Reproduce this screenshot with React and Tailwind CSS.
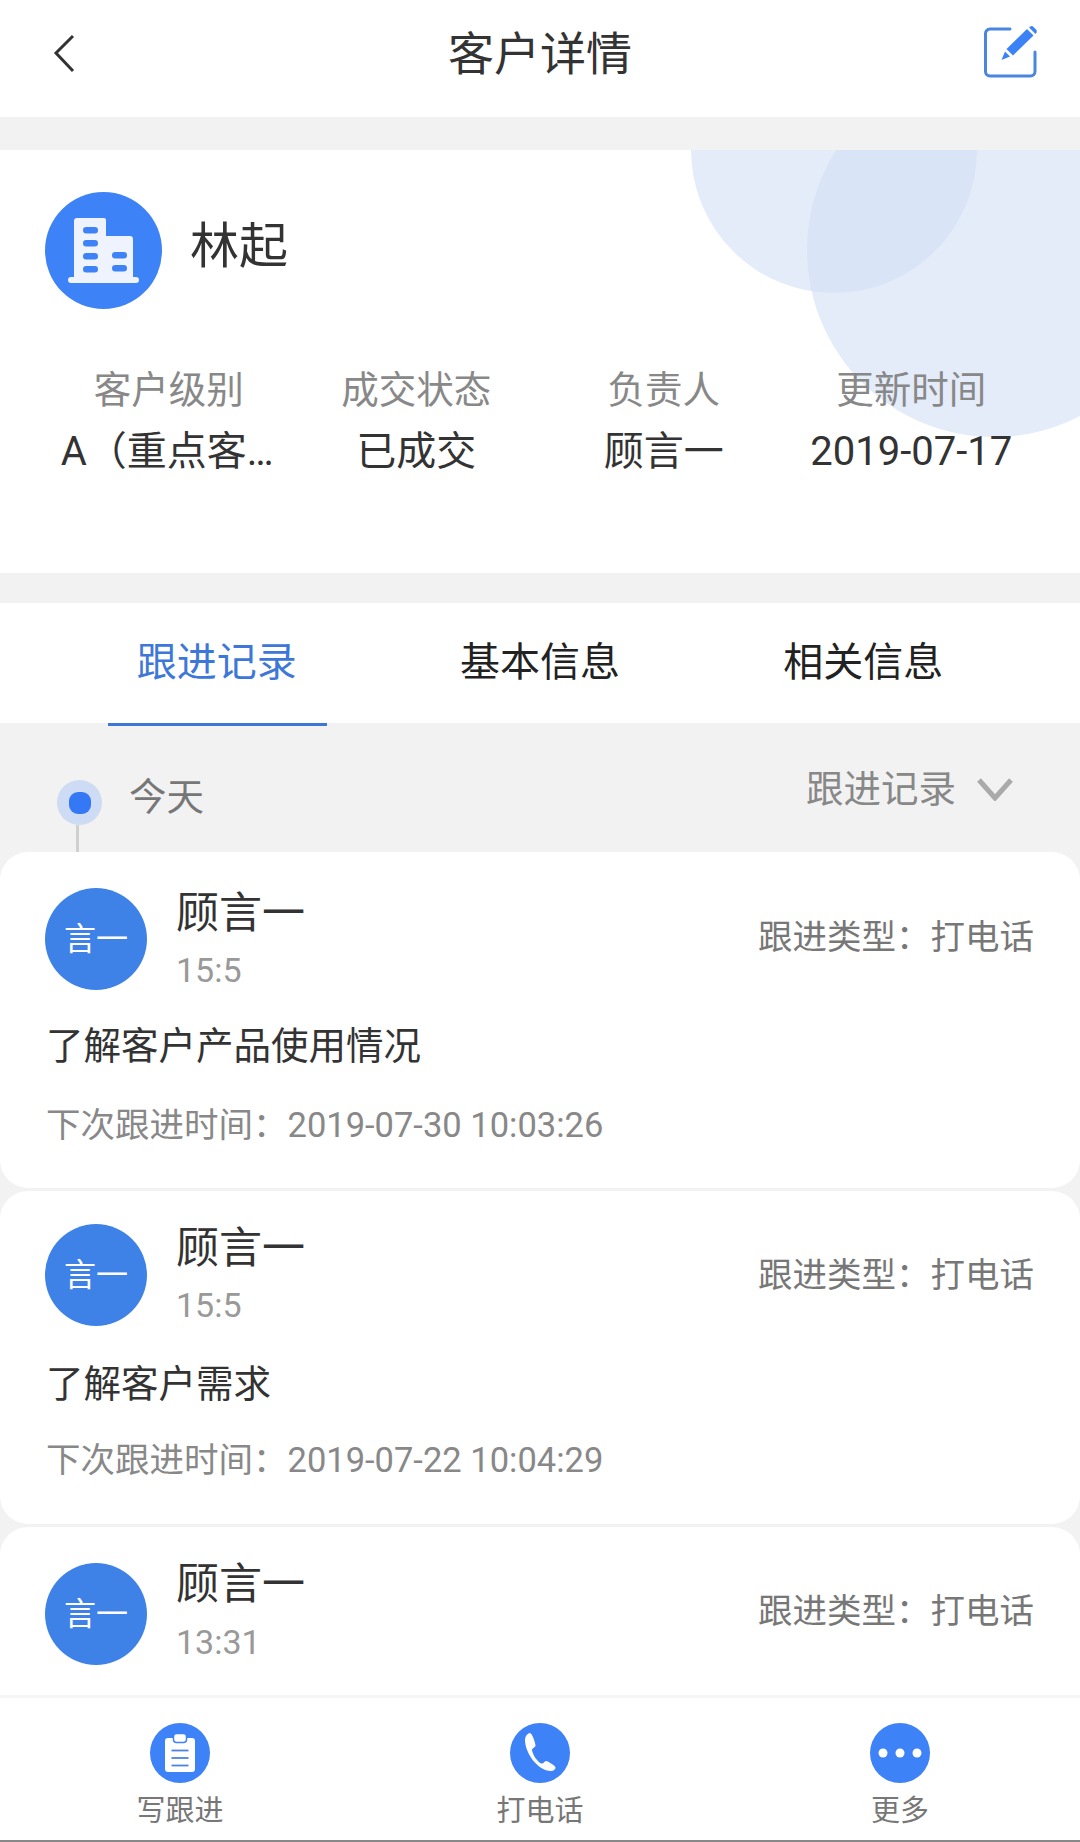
const stats = [
  { label: '客户级别', value: 'A（重点客户）' },
  { label: '成交状态', value: '已成交' },
  { label: '负责人', value: '顾言一' },
  { label: '更新时间', value: '2019-07-17' },
];

const records = [
  {
    time: '15:5', text: '了解客户产品使用情况', next: '2019-07-30 10:03:26',
    card: 'rounded-[28px] pt-[36px] pb-[41px]', name: '', timeGap: 'mt-[12px]', right: 'mt-[27px]', textGap: 'mt-[31px]', nextGap: 'mt-[32px]',
  },
  {
    time: '15:5', text: '了解客户需求', next: '2019-07-22 10:04:29',
    card: 'rounded-[28px] pt-[33px] pb-[42px]', name: '-mt-[1px]', timeGap: 'mt-[12px]', right: 'mt-[29px]', textGap: 'mt-[33px]', nextGap: 'mt-[29px]',
  },
  {
    time: '13:31', text: '', next: '',
    card: 'rounded-t-[28px] pt-[36px] flex-1', name: '-mt-[4px]', timeGap: 'mt-[13px]', right: 'mt-[26px]', textGap: '', nextGap: '',
  },
];

const BackIcon = () => (
  <svg className="ml-[13px]" width="24" height="40" viewBox="0 0 24 40" fill="none">
    <path d="M21 2 L4 19 L21 37" stroke="#333" strokeWidth="3" />
  </svg>
);

const EditIcon = () => (
  <svg width="60" height="60" viewBox="0 0 60 60" fill="none">
    <path d="M29 5 H9 a4.5 4.5 0 0 0 -4.5 4.5 V47.5 a4.5 4.5 0 0 0 4.5 4.5 H49.5 a4.5 4.5 0 0 0 4.5 -4.5 V28" stroke="#4a85e0" strokeWidth="3" strokeLinecap="round" />
    <path d="M20.5 36 L24 27.5 L29 32.5 Z" fill="#3b82f6" />
    <path d="M25.5 25 L46 5 L52.5 11.5 L32 31.5 Z" fill="#3b82f6" />
    <path d="M48 3.5 L49.5 2.5 Q51 1.5 52.5 3 L55 5.5 Q56.5 7 55.5 8.5 L54.5 10 Z" fill="#3b82f6" />
  </svg>
);

const BuildingIcon = () => (
  <svg width="117" height="117" viewBox="0 0 117 117">
    <circle cx="58.5" cy="58.5" r="58.5" fill="#3e82f7" />
    <path d="M32 26 H59 a2 2 0 0 1 2 2 V44 H85 a3 3 0 0 1 3 3 V86 H29 V29 a3 3 0 0 1 3 -3 Z" fill="#eef3fd" />
    <rect x="23" y="85" width="71" height="6" rx="3" fill="#eef3fd" />
    {[35, 48, 61, 74].map((y) => (
      <rect key={y} x="38" y={y} width="15" height="6.5" rx="3.25" fill="#3e82f7" />
    ))}
    {[60, 73].map((y) => (
      <rect key={y} x="67" y={y} width="15" height="6.5" rx="3.25" fill="#3e82f7" />
    ))}
  </svg>
);

const ClipboardIcon = () => (
  <svg width="60" height="60" viewBox="0 0 60 60">
    <circle cx="30" cy="30" r="30" fill="#3e82f7" />
    <rect x="15" y="15" width="30" height="34" rx="3" fill="#fff" />
    <rect x="23.5" y="10.5" width="13" height="9" rx="3" fill="#fff" stroke="#3e82f7" strokeWidth="1.5" />
    {[27.5, 35, 42.5].map((y) => (
      <rect key={y} x="21.5" y={y - 0.9} width="17" height="1.8" fill="#4a85e0" />
    ))}
  </svg>
);

const PhoneIcon = () => (
  <svg width="60" height="60" viewBox="0 0 60 60">
    <circle cx="30" cy="30" r="30" fill="#3e82f7" />
    <path d="M20 10 C18 10 15 13 15 17 C15 30 28 48 41 48 C44 48 45.5 46 45.5 44.5 C45.5 43 38 38 36 38 C34.5 38 33.5 41 31.5 40.5 C27 39 22.5 31 22 27 C22 25 25.5 24.5 25.5 22.5 C25.5 20 22 10 20 10 Z" fill="#fff" />
  </svg>
);

const MoreIcon = () => (
  <svg width="60" height="60" viewBox="0 0 60 60">
    <circle cx="30" cy="30" r="30" fill="#3e82f7" />
    <circle cx="13" cy="30" r="4.5" fill="#fff" />
    <circle cx="30" cy="30" r="4.5" fill="#fff" />
    <circle cx="47" cy="30" r="4.5" fill="#fff" />
  </svg>
);

const RecordCard = ({ record }) => (
  <div className={`bg-white px-[45px] shrink-0 ${record.card}`}>
    <div className="flex items-start">
      <div className="w-[102px] h-[102px] rounded-full bg-[#3e82e8] flex items-center justify-center text-white text-[32px] shrink-0">
        言一
      </div>
      <div className={`ml-[29px] ${record.name}`}>
        <div className="text-[43px] leading-[50px] text-[#333]">顾言一</div>
        <div className={`text-[34px] leading-[40px] text-[#999] ${record.timeGap}`}>{record.time}</div>
      </div>
      <div className={`ml-auto mr-[1px] text-[34.5px] leading-[44px] text-[#777] ${record.right}`}>跟进类型：打电话</div>
    </div>
    {record.text && (
      <div className={`ml-[1px] text-[37.5px] leading-[50px] text-[#333] ${record.textGap}`}>{record.text}</div>
    )}
    {record.next && (
      <div className={`ml-[1px] text-[34.5px] leading-[44px] text-[#888] ${record.nextGap}`}>下次跟进时间：{record.next}</div>
    )}
  </div>
);

const App = () => {
  return (
    <div className="w-[1080px] h-[1842px] flex flex-col overflow-hidden bg-[#f2f2f2] font-['Roboto','Noto_Sans_CJK_SC',sans-serif]">
      {/* Header */}
      <div className="h-[117px] shrink-0 bg-white flex items-center px-[39px] pb-[9px]">
        <div className="flex-1 flex">
          <BackIcon />
        </div>
        <div className="text-[46px] text-[#333]">客户详情</div>
        <div className="flex-1 flex justify-end">
          <EditIcon />
        </div>
      </div>

      {/* Customer card */}
      <div className="relative mt-[33px] h-[423px] shrink-0 bg-white overflow-hidden">
        <div className="absolute left-[807px] top-[-87px] w-[374px] h-[374px] rounded-full bg-[#e4ecfa]" />
        <div className="absolute left-[691px] top-[-143px] w-[286px] h-[286px] rounded-full bg-[#e4ecfa] overflow-hidden">
          <div className="absolute left-[116px] top-[56px] w-[374px] h-[374px] rounded-full bg-[#d9e4f7]" />
        </div>
        <div className="relative flex items-center pl-[45px] pt-[42px]">
          <BuildingIcon />
          <div className="ml-[28px] mb-[7px] text-[49px] text-[#333]">林起</div>
        </div>
        <div className="relative mt-[59px] px-[45px] grid grid-cols-4">
          {stats.map((s) => (
            <div key={s.label} className="flex flex-col items-center">
              <div className="text-[37.5px] leading-[44px] text-[#888]">{s.label}</div>
              <div className="mt-[15px] max-w-[216px] truncate text-[40px] leading-[50px] text-[#333]">{s.value}</div>
            </div>
          ))}
        </div>
      </div>

      {/* Tabs */}
      <div className="mt-[30px] h-[120px] shrink-0 bg-white grid grid-cols-3 px-[55px] text-[40px] text-[#222]">
        <div className="flex items-center justify-center text-[#3d78d8]">跟进记录</div>
        <div className="flex items-center justify-center">基本信息</div>
        <div className="flex items-center justify-center">相关信息</div>
      </div>
      <div className="h-[3px] w-[219px] ml-[108px] shrink-0 bg-[#3d78d8]" />

      {/* Timeline */}
      <div className="h-[126px] shrink-0 relative flex items-start justify-between pl-[57px] pr-[66px]">
        <div className="flex flex-col items-center">
          <div className="w-[45px] h-[45px] mt-[54px] rounded-full bg-[#cddcf4] flex items-center justify-center">
            <div className="w-[22px] h-[22px] rounded-[9px] bg-[#3478f6]" />
          </div>
          <div className="w-[3px] h-[27px] mr-[4px] bg-[#d0d0d0]" />
        </div>
        <div className="absolute left-[129px] top-[46px] text-[37.5px] leading-[50px] text-[#777]">今天</div>
        <div className="flex items-center mt-[38px]">
          <span className="text-[37.5px] leading-[50px] text-[#888]">跟进记录</span>
          <svg className="ml-[20px]" width="38" height="24" viewBox="0 0 38 24" fill="none">
            <path d="M3 3 L19 21 L35 3" stroke="#aaa" strokeWidth="5" />
          </svg>
        </div>
      </div>

      {/* Records */}
      <div className="flex-1 min-h-0 overflow-hidden flex flex-col gap-[3px]">
        {records.map((r, i) => (
          <RecordCard key={i} record={r} />
        ))}
      </div>

      {/* Bottom bar */}
      <div className="h-[147px] shrink-0 bg-white border-t-[3px] border-t-[#f6f6f6] border-b-[2px] border-b-[#888] grid grid-cols-3">
        {[
          { Icon: ClipboardIcon, label: '写跟进' },
          { Icon: PhoneIcon, label: '打电话' },
          { Icon: MoreIcon, label: '更多' },
        ].map(({ Icon, label }) => (
          <div key={label} className="flex flex-col items-center pt-[25px]">
            <Icon />
            <div className="mt-[8px] text-[29px] leading-[40px] text-[#777]">{label}</div>
          </div>
        ))}
      </div>
    </div>
  );
};

export default App;
